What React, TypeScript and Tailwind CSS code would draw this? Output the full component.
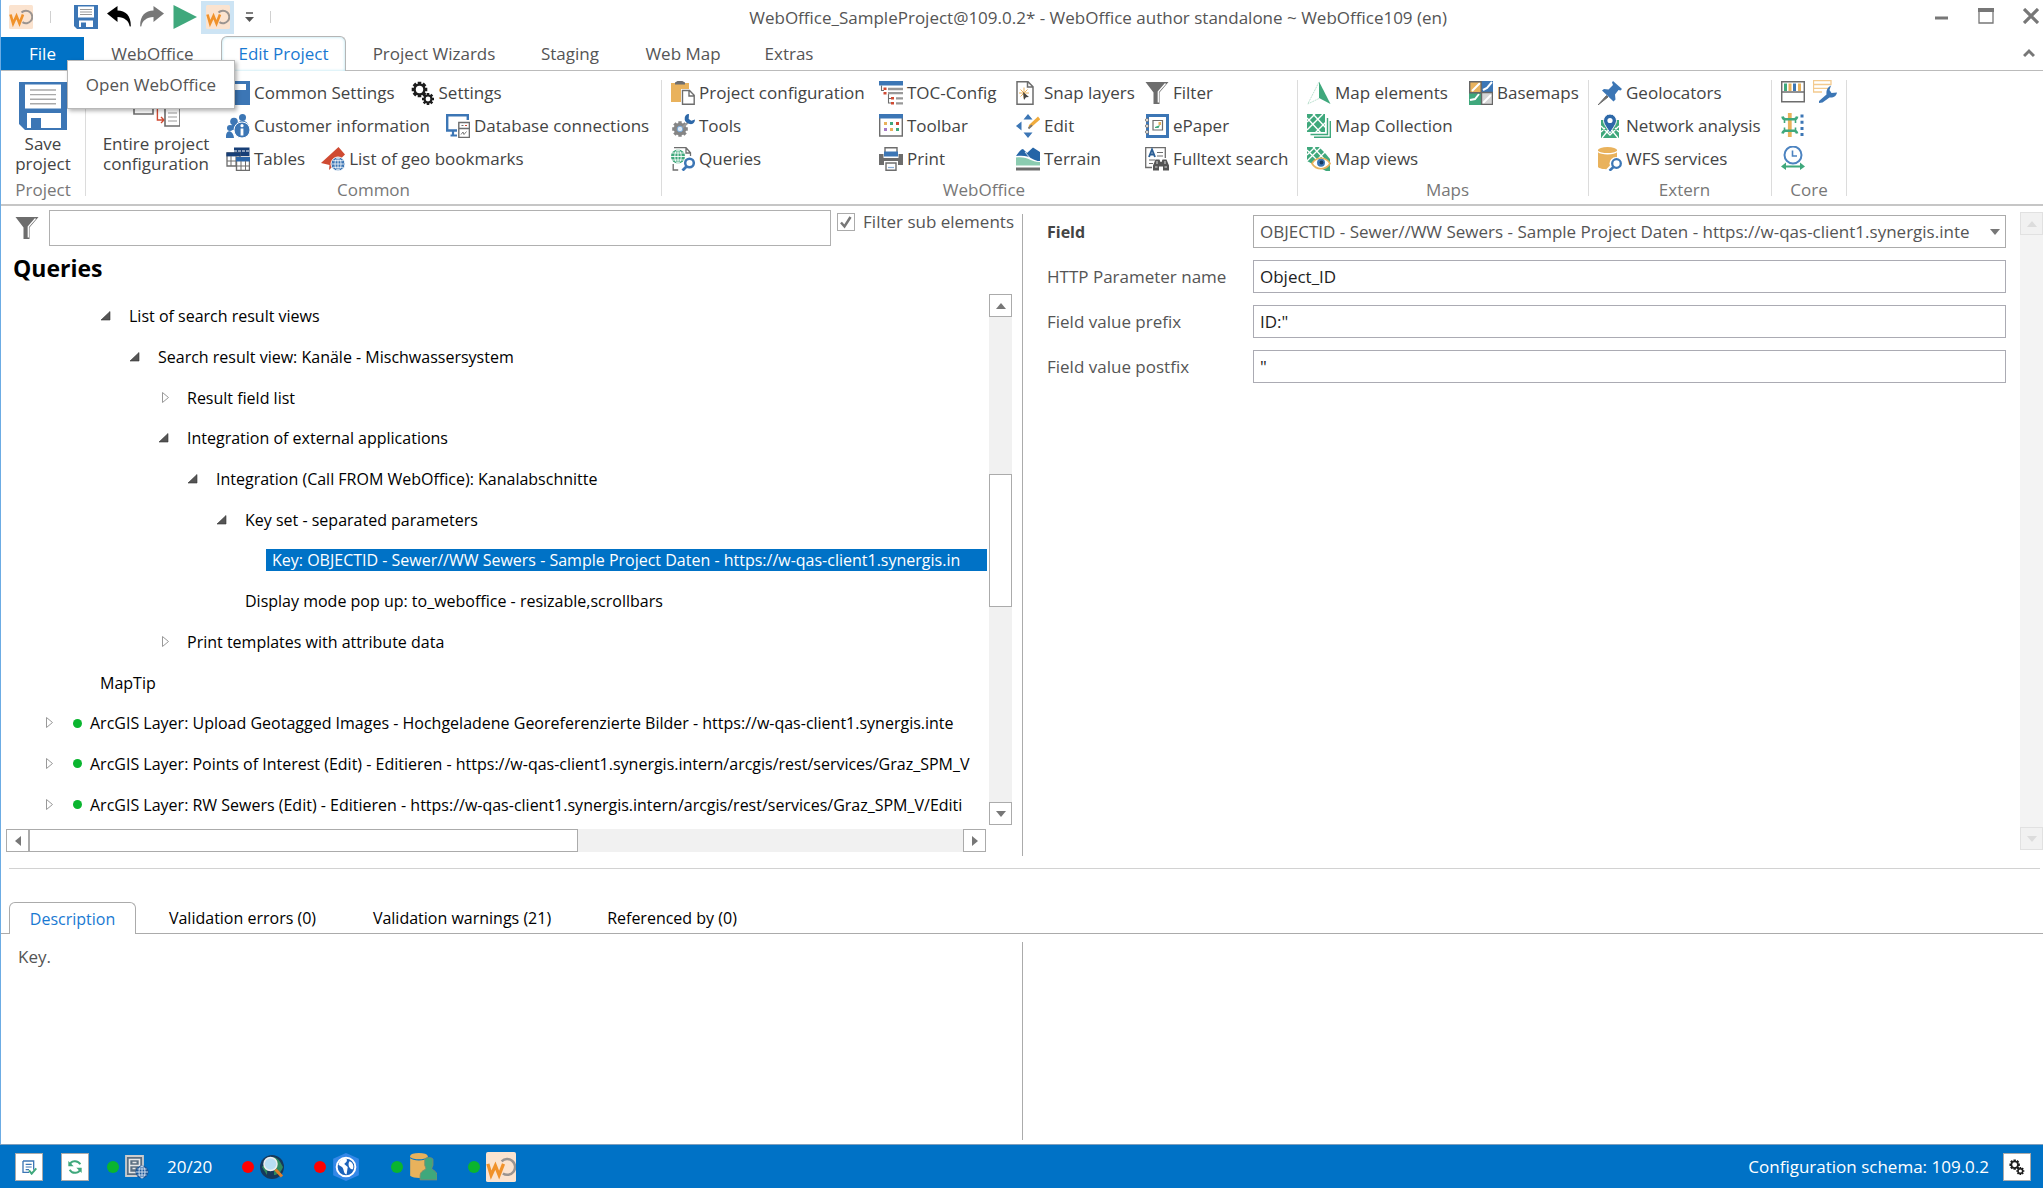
import type { ReactNode } from "react";

const BLUE = "#3c76b5";
const GREEN = "#3fa87c";
const ORANGE = "#e9b25c";
const GRAY = "#6d6d6d";
const RED = "#cf4a32";

const Icon = ({
  children,
  className = "size-6 shrink-0",
}: {
  children: ReactNode;
  className?: string;
}) => (
  <svg viewBox="0 0 24 24" className={className} fill="none" aria-hidden="true">
    {children}
  </svg>
);

const WoLogo = ({ className = "size-6 shrink-0" }: { className?: string }) => (
  <Icon className={className}>
    <rect width="24" height="24" rx="1.5" fill="#fbe3cf" />
    <path d="M12.5 7.5A6.3 6.3 0 1 1 13.5 17.2" stroke="#9b9490" strokeWidth="2" />
    <path d="M1.5 9.5l2.600 9L7.500 11l3 7.500L14 9.500" stroke="#f0922b" strokeWidth="2.6" />
  </Icon>
);

const SaveIcon = ({ className }: { className?: string }) => (
  <Icon className={className}>
    <path d="M0 0h24v24H3l-3-3z" fill={BLUE} />
    <path d="M3 1.3h18v12H3zM4 15.5h17V23H4z" fill="#fff" />
    <path d="M5.5 4h13M5.5 6.3h13M5.5 8.6h13M5.5 10.9h13" stroke="#a9a9a9" strokeWidth=".7" />
    <path d="M6 18h5v5.5H6z" fill={BLUE} />
  </Icon>
);

const SmallSaveIcon = () => (
  <Icon>
    <path d="M0 0h24v24H3l-3-3z" fill={BLUE} />
    <path d="M4 1.5h16v11H4zM5 15.5h14V22H5z" fill="#fff" />
    <path d="M6 4.5h12M6 7h12M6 9.5h12" stroke="#999" />
    <path d="M7 17.5h5V23H7z" fill={BLUE} />
  </Icon>
);

const UndoIcon = ({ flip = false }: { flip?: boolean }) => (
  <Icon className={flip ? "size-6 shrink-0 -scale-x-100 text-[#777]" : "size-6 shrink-0 text-black"}>
    <path
      d="M0 8.5L10.5 1v4.500c8 0 13.500 5 13.300 15.500-.2.800-1 .8-1.200 0C21.500 15.500 17.500 12.500 10.500 12v5z"
      fill="currentColor"
    />
  </Icon>
);

const PlayIcon = () => (
  <Icon>
    <path d="M.5 0L24 12 .5 24z" fill={GREEN} />
  </Icon>
);

const FunnelIcon = ({ className }: { className?: string }) => (
  <Icon className={className}>
    <path d="M.5 1h23l-9 10.5V23h-6V11.5z" fill={GRAY} />
    <path d="M20.5 2.5l-7.200 8.200V21.5" stroke="#fff" strokeWidth="1.3" />
  </Icon>
);

const SchemaIcon = () => (
  <Icon className="size-12 shrink-0">
    <path d="M1 8v8h9.5V8z" stroke={GRAY} strokeWidth=".8" />
    <path d="M12.7 12v7h3M14.5 17.5l1.5 1.5-1.5 1.5" stroke={RED} strokeWidth=".7" />
    <path d="M16.5 13h7.500v9h-7.500z" stroke={GRAY} strokeWidth=".8" />
    <path d="M18 15.500h4.500M18 17.500h4.500M18 19.500h4.500" stroke="#999" strokeWidth=".6" />
  </Icon>
);

const WindowIcon = () => (
  <Icon>
    <path d="M0 0h24v24H0z" fill={BLUE} />
    <path d="M3 3h17v6H3z" fill="#fff" />
  </Icon>
);

const gearTeeth = "M0-6V6M-6 0H6M-4.3-4.3L4.3 4.3M-4.3 4.3L4.3-4.3";

const GearsIcon = ({ className }: { className?: string }) => (
  <Icon className={className}>
    <g transform="translate(8.5 8.5)">
      <path d={gearTeeth} stroke="#1d1d1d" strokeWidth="2.8" transform="scale(1.3)" />
      <circle r="6" fill="#1d1d1d" />
      <circle r="3.7" fill="#fff" />
    </g>
    <g transform="translate(17 18)">
      <path d={gearTeeth} stroke="#1d1d1d" strokeWidth="2.6" />
      <circle r="4.5" fill="#1d1d1d" />
      <circle r="2.4" fill="#fff" />
    </g>
  </Icon>
);

const PeopleIcon = () => (
  <Icon>
    <circle cx="16.5" cy="3.5" r="3.5" fill={BLUE} />
    <path d="M11 12c0-7 11-7 11 0z" fill={BLUE} />
    <circle cx="8" cy="7.5" r="3.8" fill={BLUE} />
    <path d="M3 16c0-7 10-7 10 0z" fill={BLUE} />
    <circle cx="4" cy="14" r="3" fill={BLUE} />
    <path d="M0 24c-1-9 7-9 8 0z" fill={BLUE} />
    <circle cx="16" cy="16" r="8" fill={BLUE} stroke="#fff" />
    <circle cx="16" cy="11.7" r="1.6" fill="#fff" />
    <path d="M16 14.5v7" stroke="#fff" strokeWidth="2.8" />
  </Icon>
);

const TablesIcon = () => (
  <Icon>
    <path d="M8 .5h15.5V9H8z" fill="#173f77" />
    <path d="M8 4h15" stroke="#fff" strokeDasharray="3 1" />
    <path d="M1 6h13v13H1z" fill="#fff" stroke={GRAY} strokeWidth="1.3" />
    <path d="M.4 5.4h14.2v4H.4z" fill="#173f77" />
    <path d="M1 14h13M5 9v10M10 9v10" stroke={GRAY} />
    <path d="M10.5 10.5h13v13h-13z" fill="#fff" stroke={GRAY} strokeWidth="1.4" />
    <path d="M10 10h14v4.5H10z" fill="#2c66a8" />
    <path d="M10 19h14M15 14v10M19.5 14v10" stroke={GRAY} />
  </Icon>
);

const BookmarkGlobeIcon = () => (
  <Icon>
    <path d="M17.5 0L24 7.5 8 23l.5-5L0 16z" fill={RED} />
    <circle cx="17" cy="17" r="7" fill={BLUE} stroke="#fff" />
    <path d="M11 17h12M17 11v12M12 13.7h10M12 20.3h10" stroke="#fff" strokeWidth=".8" />
    <ellipse cx="17" cy="17" rx="3" ry="6.2" stroke="#fff" strokeWidth=".8" />
  </Icon>
);

const DatabaseConnIcon = () => (
  <Icon>
    <path d="M11 16.5H1.2V1.2h20.600V6" stroke={BLUE} strokeWidth="2.4" />
    <path d="M7 17v4M4.5 21.5H11" stroke={BLUE} strokeWidth="2.2" />
    <path d="M12.8 8.5h10.600v15H12.8zM13 14.5h10" stroke={GRAY} strokeWidth="1.4" fill="#fff" />
    <path d="M15.5 11.5h2" stroke={GRAY} />
    <path d="M19 11.5h2" stroke={RED} />
    <path d="M15 20.5l2-2.5 1 2.5 2.5-3" stroke={GRAY} strokeWidth=".9" />
  </Icon>
);

const ClipboardIcon = () => (
  <Icon>
    <path d="M0 2h18v19H0z" fill={ORANGE} />
    <path d="M4 3.5v-2L6.500 0h4.800L14 1.5v2z" fill={GRAY} />
    <path d="M10 8h9l5 5v11H10z" fill="#fff" />
    <path
      d="M11.5 9.5h7l4.7 4.7v9H11.5zM18 9.5V15h5"
      fill="#fff"
      stroke={GRAY}
      strokeWidth="1.4"
    />
  </Icon>
);

const ToolsIcon = () => (
  <Icon>
    <g transform="translate(9 15)">
      <path d={gearTeeth} stroke="#858585" strokeWidth="2.6" transform="scale(1.3)" />
      <circle r="6.3" fill="#858585" />
      <circle r="2.8" fill="#dce9f5" stroke="#79a7d4" />
    </g>
    <path d="M11.5 13.500l5.500-5" stroke="#999" strokeWidth="2" />
    <path
      d="M18 0c-3 0-4.5 2-4.3 5.2 0 3.2 5 5.5 7.3 4.8 1.5-.5 3-2 3-4.5l-3.7 1.2-2.6-1.8z"
      fill="#2d68a8"
    />
  </Icon>
);

const QueriesIcon = () => (
  <Icon>
    <path d="M3 .7h12l4.5 5V9M2.2 17v6h5M15 1v5h4" stroke={GRAY} strokeWidth="1.3" />
    <circle cx="7" cy="9.5" r="7" fill={GREEN} />
    <path d="M0 9.5h14M7 3v13M1 6h12M1 13h12" stroke="#fff" strokeWidth=".9" />
    <ellipse cx="7" cy="9.5" rx="3.2" ry="6.7" stroke="#fff" strokeWidth=".9" />
    <circle cx="18.5" cy="16" r="4.3" stroke={BLUE} strokeWidth="2.5" fill="#fff" />
    <path d="M15.5 19.5l-4 4" stroke={BLUE} strokeWidth="2.8" />
  </Icon>
);

const TocIcon = () => (
  <Icon>
    <path d="M0 0h24v4.500H0z" fill={BLUE} />
    <path d="M2.5 4.5v5H5M9.5 13v9H12M9.5 17.5H12" stroke={GRAY} strokeWidth="1.1" />
    <path d="M4.5 6.500h3V9h-3zM4.500 11h3v2.500h-3zM12 16h3v2.500h-3zM12 21h3v2.500h-3z" fill={RED} />
    <path d="M9 8h15M9 12.2h15M17 17.3h7M17 22.3h7" stroke="#999" strokeWidth="2.3" />
  </Icon>
);

const ToolbarIcon = () => (
  <Icon>
    <path d="M.7 1h22.600v21H.7z" stroke={GRAY} strokeWidth="1.4" />
    <path d="M0 0h24v4.500H0z" fill={BLUE} />
    <path d="M5 8h3v3H5zM11 14h3v3h-3z" fill={ORANGE} />
    <path d="M11 8h3v3h-3zM17 14h3v3h-3z" fill={GREEN} />
    <path d="M17 8h3v3h-3z" fill={RED} />
    <path d="M5 14h3v3H5z" fill="#a578c4" />
  </Icon>
);

const PrintIcon = () => (
  <Icon>
    <path d="M6 .7h12V6H6z" stroke={GRAY} strokeWidth="1.4" />
    <path d="M0 7h4.500v4h15V7H24v11h-5v-4H5v4H0z" fill={GRAY} />
    <path d="M5 4.500h14v5H5z" fill={BLUE} />
    <path d="M7 16h10v7.200H7z" fill="#fff" stroke={GRAY} strokeWidth="1.4" />
    <path d="M9 20.500h6" stroke="#8ab0da" strokeWidth="1.2" />
  </Icon>
);

const SnapIcon = () => (
  <Icon>
    <path d="M1 .7h11l5 5v17.500H1zM11.500 1v5H17" stroke={GRAY} strokeWidth="1.5" />
    <path d="M8 6.500v11M3 12h10M4.500 8.500l7 7M11.500 8.500l-7 7" stroke={ORANGE} />
    <path d="M7 11l6 5-3 .2L8 19z" fill="#444" />
  </Icon>
);

const EditIcon = () => (
  <Icon>
    <path d="M12 0l4.500 5.500h-9zM12 24l-4.500-5.500h9zM0 12l5.500-4.500v9z" fill={BLUE} />
    <path d="M22 2.500l2.200 2.700-9 8-3 1.300.8-3.500z" fill="#f0ab3c" />
    <path d="M12.500 14.500l3.500-3.300" stroke="#777" strokeWidth="1.8" />
  </Icon>
);

const TerrainIcon = () => (
  <Icon>
    <path d="M0 9c3-4 5-7 7-7l4 4 6-5.500L24 5v9c-8 0-9-7-24-5z" fill="#2565a7" />
    <path d="M9 5l5 6" stroke="#fff" strokeWidth=".8" />
    <path d="M0 10.500c13-1.500 15 5 24 4.500v3.500H0z" fill="#8bcbb0" />
    <path d="M0 20.500h24v3H0z" fill={GRAY} />
  </Icon>
);

const EpaperIcon = () => (
  <Icon>
    <path d="M2.500 1.500h20v21h-20z" stroke={BLUE} strokeWidth="3" />
    <path d="M8 6.500h9.500V16H8z" stroke={GRAY} strokeWidth="1.2" />
    <path d="M13.500 8h2.500v3h-2.500z" fill={ORANGE} />
    <path d="M10 13l5-2-1.500 3H10z" fill={GREEN} />
    <circle cx="2" cy="6" r="1.5" stroke="#777" fill="#fff" />
    <circle cx="2" cy="12" r="1.5" stroke="#777" fill="#fff" />
    <circle cx="2" cy="18" r="1.5" stroke="#777" fill="#fff" />
  </Icon>
);

const FulltextIcon = () => (
  <Icon>
    <path d="M7 20.500H.7V.7h19.600V11" stroke={GRAY} strokeWidth="1.3" />
    <path d="M4 10l3-7.500L10 10M5 7.500h4" stroke="#2c5f95" strokeWidth="1.9" />
    <path d="M12 5.500h6M12 9h6M4 13h6M4 16.500h4" stroke={GRAY} />
    <path
      d="M8 23.500v-5l2.500-6h4l1 2.500h1l1-2.500h4l2.500 6v5h-6v-4h-4v4z"
      fill="#555"
    />
    <path d="M10 20h2.500M19.500 20H22M12 14v3M20 14v3" stroke="#fff" strokeWidth=".8" />
  </Icon>
);

const NorthIcon = () => (
  <Icon>
    <path d="M12 .5L23.500 23 12 17z" fill={GREEN} />
    <path d="M12 1L.8 23 12 17.500" stroke="#b6dccb" strokeWidth=".9" strokeDasharray="2 .7" />
  </Icon>
);

const MapCollectionIcon = () => (
  <Icon>
    <path d="M0 0h18v18H0z" fill={GREEN} />
    <path
      d="M0 8L8 0M0 16L16 0M8 19L19 8M0 4l14 15M6 0l13 14"
      stroke="#fff"
      strokeWidth="1.4"
    />
    <path d="M20.500 4v16.500h-17M23.300 7v16.300H7" stroke={GREEN} strokeWidth="1.4" />
  </Icon>
);

const MapViewsIcon = () => (
  <Icon>
    <path d="M0 0h12l6 6 5 6v12h-4L0 14z" fill={GREEN} />
    <path
      d="M0 8L8 0M0 14L14 0M8 15L19 4M0 3l15 15M6 0l13 14"
      stroke="#fff"
      strokeWidth="1.3"
    />
    <path
      d="M5 16.500c4-7 14-7 18 0-4 7-14 7-18 0z"
      fill="#fff"
      stroke={ORANGE}
      strokeWidth="1.7"
    />
    <circle cx="14" cy="15.700" r="4" fill={BLUE} />
    <circle cx="14.500" cy="15.500" r="1.9" fill="#173a61" />
  </Icon>
);

const BasemapsIcon = () => (
  <Icon>
    <path d="M0 0h12v12H0z" fill={ORANGE} />
    <path d="M12 0h12v12H12z" fill={BLUE} />
    <path d="M0 12h12v12H0z" fill={GREEN} />
    <path d="M12 12h12v12H12z" fill="#d6d6d6" />
    <path
      d="M3 10l8-8M14 9l4-2 5-6M1 19l5-1 4-5M14 22l8-8"
      stroke="#fff"
      strokeWidth="2"
    />
    <path d="M12.500 11.500h11v12h-11zM.7.700h11.500v11H.7z" stroke="#666" strokeWidth="1.4" />
  </Icon>
);

const PinIcon = () => (
  <Icon>
    <path d="M0 24l8.500-9.500 1.500 1.500z" fill={GRAY} stroke={GRAY} />
    <path
      d="M15 0l9 8-1.500 1.500-2-.5-3.500 4.500.5 5-2 2L4 9.500 6 8l4.500.5L15 4l-1-2.500z"
      fill={BLUE}
    />
  </Icon>
);

const NetworkIcon = () => (
  <Icon>
    <path d="M3 6h18v18H3z" fill={GREEN} />
    <path
      d="M3 12l9 9 9-9M4 24l8-10 8 10M3 18l4-4M21 18l-4-4"
      stroke="#fff"
      strokeWidth="1.4"
    />
    <path
      d="M12 19C9 14 5.500 10 5.500 6.500a6.500 6.500 0 0 1 13 0C18.500 10 15 14 12 19z"
      fill="#2d68a8"
      stroke="#fff"
    />
    <circle cx="12" cy="6.500" r="2.6" fill="#fff" />
  </Icon>
);

const WfsIcon = () => (
  <Icon>
    <path d="M0 3v17c2 3 17 3 19 0V3z" fill={ORANGE} />
    <ellipse cx="9.500" cy="3" rx="9.500" ry="3" fill={ORANGE} />
    <path d="M0 4.500c3 3 16 3 19 0" stroke="#fff" strokeWidth="1.3" />
    <circle cx="18" cy="16.500" r="6.500" fill="#fff" />
    <path d="M10 24l6-6" stroke="#fff" strokeWidth="5" />
    <circle cx="18.500" cy="16.500" r="4.3" stroke={BLUE} strokeWidth="2.3" fill="#fff" />
    <path d="M15.500 20l-4 3.700" stroke={BLUE} strokeWidth="2.6" />
  </Icon>
);

const ShelfIcon = () => (
  <Icon>
    <path d="M.7 1.700h22.600v20H.7zM1 12h22" stroke={GRAY} strokeWidth="1.5" />
    <path d="M3 3.500h3V11H3z" fill={GREEN} />
    <path d="M7.500 3.500h3V11h-3zM17 3.500h3V11h-3z" fill={ORANGE} />
    <path d="M12 3.500h3V11h-3z" fill={BLUE} />
  </Icon>
);

const WrenchListIcon = () => (
  <Icon>
    <path
      d="M.5.700h17.500v3.800H.5zM.5 4.500v3.800H15M.5 8.300v3.700H9"
      stroke="#f3ca8f"
      strokeWidth="1.3"
    />
    <path
      d="M6 21l7.500-6.500c-.5-4 1-7.500 4.500-9l-1.500 4.500 2 3 5.500-.5c-.5 3.500-3.500 5.500-7.500 5L9.500 22.500 6 23z"
      fill={BLUE}
    />
  </Icon>
);

const SplitIcon = () => (
  <Icon>
    <path d="M8.800 0v24" stroke={ORANGE} strokeWidth="3.8" />
    <path
      d="M1.500 3.500c.5 2.500 1.500 2.800 3 2.800h8.600c1.500 0 2.500-.3 3-2.800M1.500 20.500c.5-2.500 1.500-2.800 3-2.800h8.600c1.500 0 2.500.3 3 2.800"
      stroke={GREEN}
      strokeWidth="2.6"
    />
    <path d="M3.500 7v3M14.500 7v3M3.500 14.500v3M14.500 14.500v3" stroke={GREEN} strokeWidth="1.6" />
    <path d="M21 1.500v22" stroke={BLUE} strokeWidth="3" strokeDasharray="3 3.200" />
  </Icon>
);

const ClockIcon = () => (
  <Icon>
    <circle cx="12" cy="9" r="8.500" stroke="#4c83c0" strokeWidth="2" />
    <path d="M11.500 4.500V10H16" stroke="#4c83c0" strokeWidth="1.6" />
    <path d="M0 20.500l5-4v3h14v-3l5 4-5 3.500v-2.500H5V24z" fill={GREEN} />
  </Icon>
);

const RibbonButton = ({ icon, label }: { icon: ReactNode; label: string }) => (
  <button
    type="button"
    className="flex items-center gap-1 text-[17px] leading-[25px] whitespace-nowrap text-[#444]"
  >
    {icon}
    <span>{label}</span>
  </button>
);

const Group = ({
  title,
  className = "",
  children,
}: {
  title: string;
  className?: string;
  children: ReactNode;
}) => (
  <section
    className={`flex shrink-0 flex-col justify-between border-r border-[#dcdcdc] ${className}`}
    aria-label={title}
  >
    <div className="flex">{children}</div>
    <div className="text-center text-[17px] leading-3 text-[#777]">{title}</div>
  </section>
);

const Column = ({ className = "", children }: { className?: string; children: ReactNode }) => (
  <div className={`flex flex-col items-start gap-2 ${className}`}>{children}</div>
);

const tabs = [
  { label: "WebOffice", width: "w-[137px]" },
  { label: "Edit Project", width: "w-[125px]", active: true },
  { label: "Project Wizards", width: "w-[176px]" },
  { label: "Staging", width: "w-[96px]" },
  { label: "Web Map", width: "w-[130px]" },
  { label: "Extras", width: "w-[82px]" },
];

type TreeNode = {
  label: string;
  level: number;
  state?: "open" | "closed";
  selected?: boolean;
  dot?: boolean;
};

const nodes: TreeNode[] = [
  { label: "List of search result views", level: 2, state: "open" },
  { label: "Search result view: Kanäle - Mischwassersystem", level: 3, state: "open" },
  { label: "Result field list", level: 4, state: "closed" },
  { label: "Integration of external applications", level: 4, state: "open" },
  { label: "Integration (Call FROM WebOffice): Kanalabschnitte", level: 5, state: "open" },
  { label: "Key set - separated parameters", level: 6, state: "open" },
  {
    label: "Key: OBJECTID - Sewer//WW Sewers - Sample Project Daten - https://w-qas-client1.synergis.in",
    level: 7,
    selected: true,
  },
  { label: "Display mode pop up: to_weboffice - resizable,scrollbars", level: 6 },
  { label: "Print templates with attribute data", level: 4, state: "closed" },
  { label: "MapTip", level: 1 },
  {
    label:
      "ArcGIS Layer: Upload Geotagged Images - Hochgeladene Georeferenzierte Bilder - https://w-qas-client1.synergis.inte",
    level: 0,
    state: "closed",
    dot: true,
  },
  {
    label:
      "ArcGIS Layer: Points of Interest (Edit) - Editieren - https://w-qas-client1.synergis.intern/arcgis/rest/services/Graz_SPM_V",
    level: 0,
    state: "closed",
    dot: true,
  },
  {
    label:
      "ArcGIS Layer: RW Sewers (Edit) - Editieren - https://w-qas-client1.synergis.intern/arcgis/rest/services/Graz_SPM_V/Editi",
    level: 0,
    state: "closed",
    dot: true,
  },
];

const TreeRow = ({ node }: { node: TreeNode }) => (
  <li
    role="treeitem"
    aria-selected={!!node.selected}
    className="flex flex-1 items-center text-base leading-5 whitespace-nowrap text-black"
    style={{ paddingLeft: 41 + node.level * 29 }}
  >
    <span className="w-[29px] shrink-0">
      {node.state === "open" && (
        <svg width="12" height="12" viewBox="0 0 12 12">
          <path d="M10 1.500V10H1z" fill="#555" stroke="#333" strokeWidth=".6" />
        </svg>
      )}
      {node.state === "closed" && (
        <svg width="14" height="14" viewBox="0 0 14 14">
          <path d="M4.500 1.500v10l6-5z" fill="#fff" stroke="#999" />
        </svg>
      )}
    </span>
    {node.dot && <span className="mr-2 ml-0.5 size-[9px] shrink-0 rounded-full bg-[#0ab52f]" />}
    <span className={node.selected ? "-ml-2 flex-1 bg-[#0072c6] py-px pl-1.5 text-white" : ""}>
      {node.label}
    </span>
  </li>
);

const arrowPaths = {
  up: "M5 2l5 6H0z",
  down: "M0 2h10L5 8z",
  left: "M8 0v10L2 5z",
  right: "M2 0v10l6-5z",
};

const ScrollButton = ({ dir, disabled }: { dir: keyof typeof arrowPaths; disabled?: boolean }) => (
  <button
    type="button"
    aria-label={`Scroll ${dir}`}
    disabled={disabled}
    className={`flex size-[23px] shrink-0 items-center justify-center border ${
      disabled ? "border-[#e1e1e1] bg-[#f1f1f1] text-[#dcdcdc]" : "border-[#ababab] bg-white text-[#777]"
    }`}
  >
    <svg width="10" height="10" viewBox="0 0 10 10">
      <path d={arrowPaths[dir]} fill="currentColor" />
    </svg>
  </button>
);

const fields = [
  { id: "param", label: "HTTP Parameter name", value: "Object_ID" },
  { id: "prefix", label: "Field value prefix", value: 'ID:"' },
  { id: "postfix", label: "Field value postfix", value: '"' },
];

const bottomTabs = [
  { label: "Description", width: "w-[127px]", active: true },
  { label: "Validation errors (0)", width: "w-[213px]" },
  { label: "Validation warnings (21)", width: "w-[226px]" },
  { label: "Referenced by (0)", width: "w-[194px]" },
];

const Dot = ({ color }: { color: string }) => (
  <span className={`size-3 shrink-0 rounded-full ${color}`} />
);

const App = () => {
  return (
    <div className="flex min-h-screen flex-col border-l border-[#6cace4] bg-white font-['Open_Sans',sans-serif] text-[#444]">
      {/* Title bar */}
      <header className="flex h-[37px] items-start justify-between pr-0.5">
        <div className="flex flex-1 items-center">
          <div className="flex h-[34px] items-center pl-2">
            <WoLogo />
            <span className="ml-[17px] h-3 w-px bg-[#d0d0d0]" />
            <button type="button" aria-label="Save" className="ml-[23px]">
              <SmallSaveIcon />
            </button>
            <button type="button" aria-label="Undo" className="ml-[9px]">
              <UndoIcon />
            </button>
            <button type="button" aria-label="Redo" className="ml-[9px]">
              <UndoIcon flip />
            </button>
            <button type="button" aria-label="Run" className="ml-[9px]">
              <PlayIcon />
            </button>
            <button
              type="button"
              aria-label="Open WebOffice"
              className="ml-1 flex size-[33px] items-center justify-center bg-[#cde4f4]"
            >
              <WoLogo />
            </button>
            <button type="button" aria-label="Customize toolbar" className="ml-[11px]">
              <svg width="9" height="11" viewBox="0 0 9 11">
                <path d="M1 1h7" stroke="#555" strokeWidth="1.5" />
                <path d="M0 5h9l-4.500 5z" fill="#555" />
              </svg>
            </button>
            <span className="ml-4 h-3 w-px bg-[#d0d0d0]" />
          </div>
        </div>
        <h1 className="mr-[487px] pt-1.5 text-[17px] leading-6 whitespace-nowrap text-[#555]">
          WebOffice_SampleProject@109.0.2* - WebOffice author standalone ~ WebOffice109 (en)
        </h1>
        <div className="flex items-center gap-[29px] pt-2 pr-0.5">
          <button type="button" aria-label="Minimize">
            <svg width="15" height="16" viewBox="0 0 15 16">
              <path d="M1 10h13" stroke="#777" strokeWidth="3" />
            </svg>
          </button>
          <button type="button" aria-label="Maximize">
            <svg width="16" height="16" viewBox="0 0 16 16">
              <path d="M1 1h14v14H1z" stroke="#777" strokeWidth="1.3" fill="none" />
              <path d="M0 0h16v4H0z" fill="#777" />
            </svg>
          </button>
          <button type="button" aria-label="Close">
            <svg width="16" height="16" viewBox="0 0 16 16">
              <path d="M1 1l14 14M15 1L1 15" stroke="#777" strokeWidth="3.2" />
            </svg>
          </button>
        </div>
      </header>

      {/* Ribbon tabs */}
      <nav className="relative flex h-[34px] items-end border-b border-[#bbb]">
        <button type="button" className="h-[33px] w-[83px] bg-[#0072c6] text-[17px] text-white">
          File
        </button>
        {tabs.map((tab) => (
          <button
            key={tab.label}
            type="button"
            className={`text-[17px] whitespace-nowrap ${tab.width} ${
              tab.active
                ? "-mb-px h-[35px] rounded-t-md border border-b-0 border-[#b5b5b5] bg-white text-[#1979d2] shadow-[inset_0_0_3px_#a9e0ef]"
                : "h-[33px] text-[#555]"
            }`}
          >
            {tab.label}
          </button>
        ))}
        <button type="button" aria-label="Collapse ribbon" className="mr-2 mb-3 ml-auto">
          <svg width="12" height="10" viewBox="0 0 12 10">
            <path d="M1 8l5-5 5 5" stroke="#777" strokeWidth="3" fill="none" />
          </svg>
        </button>
        <div
          role="tooltip"
          className="absolute top-[23px] left-[66px] z-10 flex h-[49px] w-[168px] items-center justify-center border border-[#b8b8b8] bg-white text-[17px] whitespace-nowrap text-[#555] shadow-[2px_2px_4px_rgba(0,0,0,0.3)]"
        >
          Open WebOffice
        </div>
      </nav>

      {/* Ribbon */}
      <div className="flex h-[135px] border-b-2 border-[#c6c6c6] pt-[9px] pb-2">
        <Group title="Project" className="w-[85px]">
          <button
            type="button"
            className="flex w-full flex-col items-center text-[17px] leading-5 text-[#444]"
          >
            <SaveIcon className="mt-0.5 mb-1 size-12" />
            <span className="w-16">Save project</span>
          </button>
        </Group>
        <Group title="Common" className="w-[576px]">
          <button
            type="button"
            className="flex w-[140px] flex-col items-center text-[17px] leading-5 text-[#444]"
          >
            <span className="mt-0.5 mb-1">
              <SchemaIcon />
            </span>
            <span className="w-[120px]">Entire project configuration</span>
          </button>
          <div className="flex flex-col gap-2">
            <div className="flex gap-4">
              <RibbonButton icon={<WindowIcon />} label="Common Settings" />
              <RibbonButton icon={<GearsIcon />} label="Settings" />
            </div>
            <div className="flex gap-4">
              <RibbonButton icon={<PeopleIcon />} label="Customer information" />
              <RibbonButton icon={<DatabaseConnIcon />} label="Database connections" />
            </div>
            <div className="flex gap-4">
              <RibbonButton icon={<TablesIcon />} label="Tables" />
              <RibbonButton icon={<BookmarkGlobeIcon />} label="List of geo bookmarks" />
            </div>
          </div>
        </Group>
        <Group title="WebOffice" className="w-[636px] pl-[9px]">
          <Column className="w-[208px]">
            <RibbonButton icon={<ClipboardIcon />} label="Project configuration" />
            <RibbonButton icon={<ToolsIcon />} label="Tools" />
            <RibbonButton icon={<QueriesIcon />} label="Queries" />
          </Column>
          <Column className="w-[137px]">
            <RibbonButton icon={<TocIcon />} label="TOC-Config" />
            <RibbonButton icon={<ToolbarIcon />} label="Toolbar" />
            <RibbonButton icon={<PrintIcon />} label="Print" />
          </Column>
          <Column className="w-[129px]">
            <RibbonButton icon={<SnapIcon />} label="Snap layers" />
            <RibbonButton icon={<EditIcon />} label="Edit" />
            <RibbonButton icon={<TerrainIcon />} label="Terrain" />
          </Column>
          <Column>
            <RibbonButton icon={<FunnelIcon />} label="Filter" />
            <RibbonButton icon={<EpaperIcon />} label="ePaper" />
            <RibbonButton icon={<FulltextIcon />} label="Fulltext search" />
          </Column>
        </Group>
        <Group title="Maps" className="w-[291px] pl-[9px]">
          <Column className="w-[162px]">
            <RibbonButton icon={<NorthIcon />} label="Map elements" />
            <RibbonButton icon={<MapCollectionIcon />} label="Map Collection" />
            <RibbonButton icon={<MapViewsIcon />} label="Map views" />
          </Column>
          <Column>
            <RibbonButton icon={<BasemapsIcon />} label="Basemaps" />
          </Column>
        </Group>
        <Group title="Extern" className="w-[183px] pl-[9px]">
          <Column>
            <RibbonButton icon={<PinIcon />} label="Geolocators" />
            <RibbonButton icon={<NetworkIcon />} label="Network analysis" />
            <RibbonButton icon={<WfsIcon />} label="WFS services" />
          </Column>
        </Group>
        <Group title="Core" className="w-[75px]">
          <div className="grid grid-cols-2 gap-x-2 gap-y-[9px] pl-[9px]">
            <button type="button" aria-label="Catalog">
              <ShelfIcon />
            </button>
            <button type="button" aria-label="Options">
              <WrenchListIcon />
            </button>
            <button type="button" aria-label="Split" className="col-span-2">
              <SplitIcon />
            </button>
            <button type="button" aria-label="Timing" className="col-span-2">
              <ClockIcon />
            </button>
          </div>
        </Group>
      </div>

      {/* Editor */}
      <main className="flex flex-1 pb-3">
        <section className="flex w-1/2 min-w-0 flex-col">
          <div className="flex items-start pt-1 pl-[14px]">
            <FunnelIcon className="mt-1.5 size-6 shrink-0" />
            <input
              type="text"
              aria-label="Filter"
              className="ml-2.5 h-9 min-w-0 flex-1 border border-[#b0b0b0] px-2 text-[17px] outline-none"
            />
            <label className="ml-1.5 flex h-6 items-center gap-2 pr-2 text-[17px] whitespace-nowrap text-[#555]">
              <span className="relative flex size-[18px]">
                <input
                  type="checkbox"
                  defaultChecked
                  className="size-[18px] appearance-none border border-[#ababab] bg-white"
                />
                <svg viewBox="0 0 18 18" className="pointer-events-none absolute inset-0">
                  <path d="M4 9.500l3.500 4 6-9.500" stroke="#777" strokeWidth="2.5" fill="none" />
                </svg>
              </span>
              Filter sub elements
            </label>
          </div>
          <h2 className="mt-1.5 pl-3 text-[23px] leading-8 font-bold text-black">Queries</h2>
          <div className="mt-2.5 flex min-h-0 flex-1 pr-[10px]">
            <ul role="tree" className="mt-0.5 flex min-w-0 flex-1 flex-col overflow-hidden">
              {nodes.map((node) => (
                <TreeRow key={node.label} node={node} />
              ))}
            </ul>
            <div className="ml-0.5 flex w-[23px] flex-col bg-[#f1f1f1]">
              <ScrollButton dir="up" />
              <div className="flex min-h-0 flex-1 flex-col">
                <div className="flex-[158]" />
                <div className="flex-[131] border border-[#ababab] bg-white" />
                <div className="flex-[196]" />
              </div>
              <ScrollButton dir="down" />
            </div>
          </div>
          <div className="mt-1 mr-9 mb-1 ml-[5px] flex bg-[#f1f1f1]">
            <ScrollButton dir="left" />
            <div className="w-[56%] border border-[#ababab] bg-white" />
            <div className="flex-1" />
            <ScrollButton dir="right" />
          </div>
        </section>

        <section className="mt-2 flex flex-1 border-l border-[#ababab]">
          <form className="flex flex-1 flex-col gap-3 pt-px pl-6 text-[17px] text-[#555]">
            <div className="flex items-center">
              <label htmlFor="field" className="w-[206px] shrink-0 text-base font-bold text-[#444]">
                Field
              </label>
              <div className="relative flex-1">
                <select
                  id="field"
                  className="h-[33px] w-full appearance-none overflow-hidden border border-[#ababab] bg-white pr-7 pl-1.5 text-[17px] text-[#555]"
                >
                  <option>
                    OBJECTID - Sewer//WW Sewers - Sample Project Daten - https://w-qas-client1.synergis.inte
                  </option>
                </select>
                <svg
                  width="10"
                  height="6"
                  viewBox="0 0 10 6"
                  className="pointer-events-none absolute top-3.5 right-1.5"
                >
                  <path d="M0 0h10L5 6z" fill="#777" />
                </svg>
              </div>
            </div>
            {fields.map((field) => (
              <div key={field.id} className="flex items-center">
                <label htmlFor={field.id} className="w-[206px] shrink-0">
                  {field.label}
                </label>
                <input
                  id={field.id}
                  type="text"
                  defaultValue={field.value}
                  className="h-[33px] min-w-0 flex-1 border border-[#ababb3] px-1.5 text-[17px] text-[#222]"
                />
              </div>
            ))}
          </form>
          <div className="-mt-0.5 mb-1.5 ml-3.5 flex w-[23px] flex-col justify-between bg-[#f3f3f3]">
            <ScrollButton dir="up" disabled />
            <ScrollButton dir="down" disabled />
          </div>
        </section>
      </main>

      {/* Details */}
      <section className="flex h-[276px] flex-col">
        <hr className="mr-[3px] ml-2 border-[#d2d2d2]" />
        <div className="mt-[34px] flex h-[31px] items-end border-b border-[#ababab] pl-2">
          {bottomTabs.map((tab) => (
            <button
              key={tab.label}
              type="button"
              className={`text-base whitespace-nowrap ${tab.width} ${
                tab.active
                  ? "-mb-px h-8 rounded-t-md border border-b-0 border-[#ababab] bg-white text-[#1979d2]"
                  : "h-[31px] text-black"
              }`}
            >
              {tab.label}
            </button>
          ))}
        </div>
        <div className="flex flex-1 pt-2 pb-1 text-[17px]">
          <p className="w-1/2 pt-0.5 pl-[17px] text-[#555]">Key.</p>
          <div className="flex-1 border-l border-[#ababab]" />
        </div>
      </section>

      {/* Status bar */}
      <footer className="-ml-px flex h-11 items-center border-t border-[#7f9fbd] bg-[#0072c6] text-[17px] text-white">
        <button type="button" aria-label="Validate" className="ml-[15px] border border-[#aaa] bg-white p-[5px]">
          <Icon className="size-4">
            <path d="M3 3h16v13M3 3v17h9" stroke={BLUE} strokeWidth="2" />
            <path d="M7 8h9M7 12h9M7 16h5" stroke={BLUE} strokeWidth="1.8" />
            <path d="M12 17l4 5 7-8" stroke={GREEN} strokeWidth="3" />
          </Icon>
        </button>
        <button type="button" aria-label="Refresh" className="ml-[18px] border border-[#aaa] bg-white p-[5px]">
          <Icon className="size-4">
            <path d="M4 10c1-8 12-9 16-2M20 14c-1 8-12 9-16 2" stroke={GREEN} strokeWidth="2.8" />
            <path d="M2 3v8h8zM22 21v-8h-8z" fill={GREEN} />
          </Icon>
        </button>
        <span className="ml-[18px] flex items-center gap-1.5">
          <Dot color="bg-[#0ab52f]" />
          <Icon>
            <path d="M1 1h17v20H1z" stroke="#ccc" strokeWidth="1.8" fill="#5b6f82" />
            <path d="M4.500 4.500h10v13h-10zM4.500 10.500h10M7.500 7.500h4M7.500 13.500h3" stroke="#e6e6e6" strokeWidth="1.6" />
            <circle cx="17" cy="17" r="6.500" fill="#1b5697" />
            <path d="M11 17h12M17 11v12M12.500 14h9M12.500 20h9" stroke="#dbe7f3" strokeWidth=".9" />
            <ellipse cx="17" cy="17" rx="3" ry="6" stroke="#dbe7f3" strokeWidth=".9" />
          </Icon>
        </span>
        <span className="ml-[18px]">20/20</span>
        <span className="ml-[30px] flex items-center gap-1.5">
          <Dot color="bg-[#ff0000]" />
          <Icon>
            <circle cx="12" cy="12" r="12" fill="#17395a" />
            <path d="M2 12c3-4 6 1 5 8M14 2c6 2 7 7 9 10-2 6-6 8-9 8" fill="#2f8a5e" />
            <circle cx="10.500" cy="9" r="6.500" fill="#b8def2" stroke="#eee" strokeWidth="1.5" />
            <path d="M15.500 14.500l6.500 7" stroke="#e0812c" strokeWidth="3" />
          </Icon>
        </span>
        <span className="ml-[30px] flex items-center gap-1.5">
          <Dot color="bg-[#ff0000]" />
          <Icon className="size-7">
            <path d="M12 0l11 5v14l-11 5-11-5V5z" fill="#3488e8" />
            <circle cx="12" cy="12" r="8" fill="#1d63ba" stroke="#fff" strokeWidth="1.7" />
            <path
              d="M5.500 10c1-4 4-6 7-5 1 3-1 3-2 4.500l3 2.500-1 6.500c-3-1-2-5-4-6.500zM15 7c3 1 4 4 3 7-3 0-5-4-3-7z"
              fill="#fff"
            />
          </Icon>
        </span>
        <span className="ml-[31px] flex items-center gap-1.5">
          <Dot color="bg-[#0ab52f]" />
          <Icon className="size-7">
            <path d="M1 2.500v17c3 2.500 13 2.500 15 0v-17z" fill={ORANGE} />
            <ellipse cx="8.500" cy="2.500" rx="7.500" ry="2.500" fill={ORANGE} />
            <path d="M1 4c3 2.500 12 2.500 15 0" stroke="#0072c6" />
            <path
              d="M13.500 5.500c0-2 7-2 7 0v5c0 1-1 1.500-1 2.500 0 2 4.500 1.500 4.500 7v3H9.500v-3c0-5.500 5-5 5-7 0-1-1-1.500-1-2.500z"
              fill={GREEN}
              stroke="#7c8f6f"
              strokeWidth=".8"
            />
          </Icon>
        </span>
        <span className="ml-[31px] flex items-center gap-1.5">
          <Dot color="bg-[#0ab52f]" />
          <WoLogo className="size-[30px]" />
        </span>
        <span className="ml-auto whitespace-nowrap">Configuration schema: 109.0.2</span>
        <button type="button" aria-label="Settings" className="mr-3 ml-3.5 border border-[#aaa] bg-white p-[5px]">
          <GearsIcon className="size-4" />
        </button>
      </footer>
    </div>
  );
};

export default App;
